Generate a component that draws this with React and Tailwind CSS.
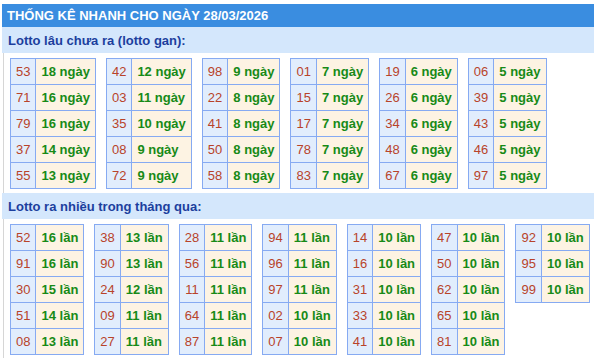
import React from 'react';

const ganData = [
    [['53', 18], ['71', 16], ['79', 16], ['37', 14], ['55', 13]],
    [['42', 12], ['03', 11], ['35', 10], ['08', 9], ['72', 9]],
    [['98', 9], ['22', 8], ['41', 8], ['50', 8], ['58', 8]],
    [['01', 7], ['15', 7], ['17', 7], ['78', 7], ['83', 7]],
    [['19', 6], ['26', 6], ['34', 6], ['48', 6], ['67', 6]],
    [['06', 5], ['39', 5], ['43', 5], ['46', 5], ['97', 5]],
];

const nhieuData = [
    [['52', 16], ['91', 16], ['30', 15], ['51', 14], ['08', 13]],
    [['38', 13], ['90', 13], ['24', 12], ['09', 11], ['27', 11]],
    [['28', 11], ['56', 11], ['11', 11], ['64', 11], ['87', 11]],
    [['94', 11], ['96', 11], ['97', 11], ['02', 10], ['07', 10]],
    [['14', 10], ['16', 10], ['31', 10], ['33', 10], ['41', 10]],
    [['47', 10], ['50', 10], ['62', 10], ['65', 10], ['81', 10]],
    [['92', 10], ['95', 10], ['99', 10]],
];

// bảng nhỏ: số | số ngày/lần
const MiniTable = ({ rows, unit }) => (
    <table className="border-collapse">
        <tbody>
            {rows.map(([so, n]) => (
                <tr key={so} className="h-[26px]">
                    <td className="border border-[#86aaf2] bg-[#e1edfd] px-[5px] text-[#b8432a] text-center">
                        {so}
                    </td>
                    <td className="border border-[#86aaf2] bg-[#fdf3e3] pl-[5px] pr-[5px] text-[#178a17] font-bold whitespace-nowrap">
                        {n} {unit}
                    </td>
                </tr>
            ))}
        </tbody>
    </table>
);

const SectionTitle = ({ children }) => (
    <div className="h-[26px] bg-[#d4e7fc] flex items-center pl-[6px] text-[#1c3f9e] font-bold text-[13px]">
        {children}
    </div>
);

const App = () => {
    return (
        <div className="pt-[4px] pl-[2px] bg-white text-[13px] leading-none" style={{ fontFamily: '"Liberation Sans", Arial, sans-serif' }}>
            <div className="h-[23px] bg-[#3a8de0] flex items-center pl-[5px] text-white font-bold text-[13px]">
                THỐNG KÊ NHANH CHO NGÀY 28/03/2026
            </div>
            <SectionTitle>Lotto lâu chưa ra (lotto gan):</SectionTitle>
            <div className="ml-[1px] border-l border-[#d6d6d6] pl-[6px] pt-[5px] pb-[4px] flex items-start gap-[10px]">
                {ganData.map((rows, i) => (
                    <MiniTable key={i} rows={rows} unit="ngày" />
                ))}
            </div>
            <SectionTitle>Lotto ra nhiều trong tháng qua:</SectionTitle>
            <div className="ml-[1px] border-l border-[#d6d6d6] pl-[6px] pt-[5px] pb-[4px] flex items-start gap-[10px]">
                {nhieuData.map((rows, i) => (
                    <MiniTable key={i} rows={rows} unit="lần" />
                ))}
            </div>
        </div>
    );
};

export default App;
